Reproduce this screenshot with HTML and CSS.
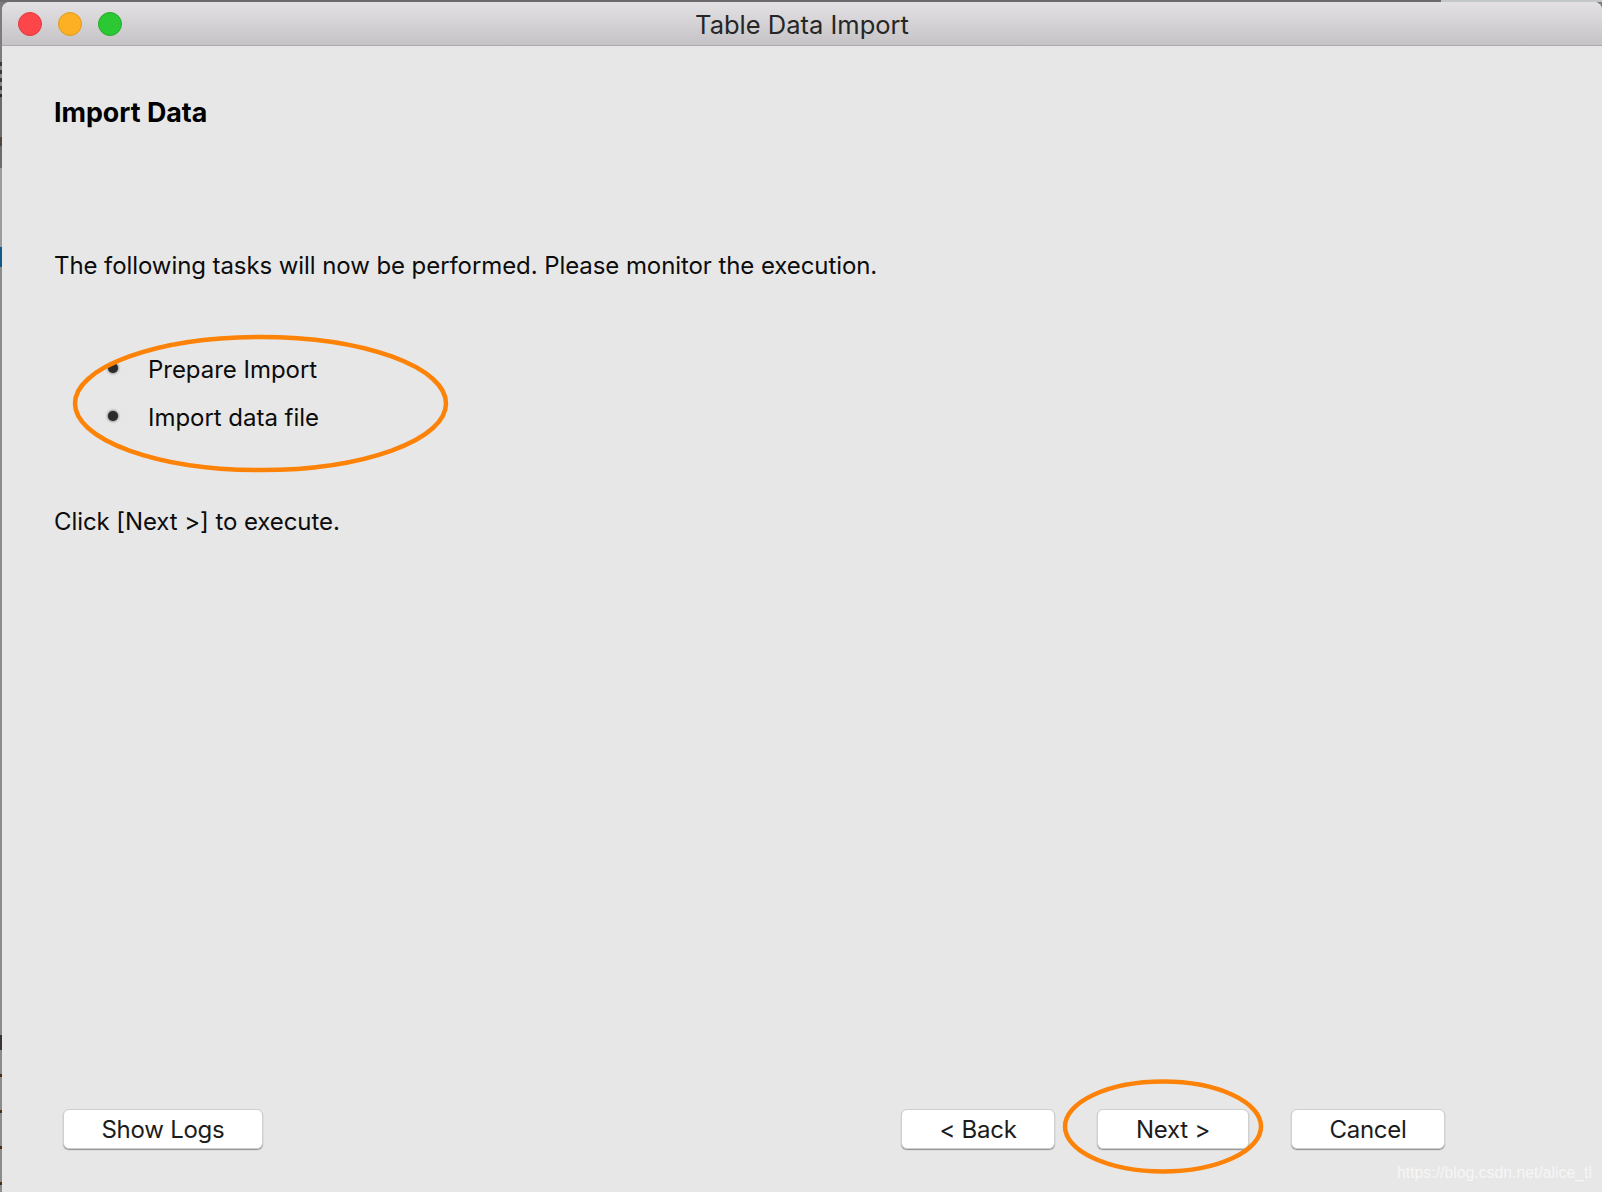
FILE: index.html
```html
<!DOCTYPE html>
<html lang="en">
<head>
<meta charset="utf-8">
<title>Table Data Import</title>
<link rel="stylesheet" href="styles.css">
</head>
<body>
<div class="topstrip"><span class="strip-dark"></span><span class="strip-light"></span></div>
<div class="window">
  <header class="titlebar">
    <div class="lights">
      <span class="light red"></span>
      <span class="light amber"></span>
      <span class="light green"></span>
    </div>
    <div class="title">Table Data Import</div>
  </header>
  <main class="content">
    <h1 class="heading">Import Data</h1>
    <p class="intro">The following tasks will now be performed. Please monitor the execution.</p>
    <ul class="tasks">
      <li class="task">Prepare Import</li>
      <li class="task">Import data file</li>
    </ul>
    <p class="hint">Click [Next &gt;] to execute.</p>
  </main>
  <footer class="actions">
    <button class="btn btn-logs">Show Logs</button>
    <div class="nav-buttons">
      <button class="btn btn-nav">&lt; Back</button>
      <button class="btn btn-next">Next &gt;</button>
      <button class="btn btn-nav">Cancel</button>
    </div>
  </footer>
</div>
<svg class="marks" width="1602" height="1192" viewBox="0 0 1602 1192" aria-hidden="true">
  <ellipse cx="260.5" cy="403.5" rx="185.5" ry="66.5" fill="none" stroke="#fd8208" stroke-width="4.5"/>
  <ellipse cx="1163" cy="1126.5" rx="98" ry="45" fill="none" stroke="#fd8208" stroke-width="4.5"/>
</svg>
<div class="watermark">https://blog.csdn.net/alice_tl</div>
</body>
</html>
```
FILE: styles.css
```css
html, body {
  margin: 0;
  padding: 0;
}
body {
  position: relative;
  width: 1602px;
  height: 1192px;
  overflow: hidden;
  background: linear-gradient(#7c7c7e 62px,
    #3a3a3a 62px, #3a3a3a 66px, #8a8a8a 66px, #8a8a8a 70px,
    #3a3a3a 70px, #3a3a3a 74px, #8a8a8a 74px, #8a8a8a 78px,
    #3a3a3a 78px, #3a3a3a 82px, #8a8a8a 82px, #8a8a8a 86px,
    #3a3a3a 86px, #3a3a3a 90px, #8a8a8a 90px, #8a8a8a 94px,
    #2a2a2a 94px, #2a2a2a 97px, #6c6c6e 97px, #6c6c6e 137px,
    #50463c 137px, #50463c 146px, #6c6c6e 146px, #6c6c6e 168px,
    #9c9c9c 168px, #9c9c9c 247px,
    #0e5a8a 247px, #0e5a8a 267px,
    #8c8c8c 267px, #8c8c8c 1035px,
    #3c3434 1035px, #3c3434 1050px,
    #8c8c8c 1050px, #8c8c8c 1074px, #4a3010 1074px, #4a3010 1077px,
    #8c8c8c 1077px, #8c8c8c 1110px, #4a3010 1110px, #4a3010 1113px,
    #8c8c8c 1113px, #8c8c8c 1146px, #4a3010 1146px, #4a3010 1149px,
    #8c8c8c 1149px, #8c8c8c 1182px, #4a3010 1182px, #4a3010 1185px,
    #8c8c8c 1185px);
  font-family: Inter, "Noto Sans", "Liberation Sans", sans-serif;
  color: #0c0c0c;
}
.topstrip {
  display: flex;
  height: 2px;
}
.strip-dark {
  width: 1441px;
  background: #6f6b6c;
}
.strip-light {
  flex: 1;
  background: #c4c8c8;
}
.window {
  margin-left: 2px;
  height: 1190px;
  display: flex;
  flex-direction: column;
  background: #e7e7e7;
  border-radius: 8px 8px 0 0;
  overflow: hidden;
}
.titlebar {
  position: relative;
  flex: none;
  height: 44px;
  box-sizing: border-box;
  display: flex;
  align-items: center;
  justify-content: center;
  background: linear-gradient(#e3e1e3, #c5c3c5);
  border-bottom: 1px solid #acaaac;
}
.lights {
  position: absolute;
  left: 16px;
  top: 10px;
  display: flex;
  gap: 16px;
}
.light {
  width: 22px;
  height: 22px;
  border-radius: 50%;
  border: 1px solid;
}
.red { background: #fc4649; border-color: #df3b3e; }
.amber { background: #fdb024; border-color: #de9a20; }
.green { background: #2ac833; border-color: #25ab2c; }
.title {
  font-size: 25.5px;
  color: #262626;
  padding-top: 2px;
}
.content {
  flex: 1;
  padding: 50px 0 0 52px;
}
.heading {
  margin: 0;
  font-size: 26.8px;
  line-height: 32px;
  font-weight: 700;
  color: #000;
}
.intro {
  margin: 122px 0 0;
  font-size: 24px;
  line-height: 32px;
  letter-spacing: -0.08px;
}
.tasks {
  list-style: none;
  margin: 72px 0 0;
  padding: 0 0 0 94px;
}
.task {
  position: relative;
  font-size: 24px;
  line-height: 32px;
  margin-bottom: 16px;
  letter-spacing: -0.03px;
}
.task::before {
  content: "";
  position: absolute;
  left: -40px;
  top: 9px;
  width: 10px;
  height: 10px;
  border-radius: 50%;
  background: #2b2b2b;
  box-shadow: 0 0 3px #2b2b2b;
}
.hint {
  margin: 72px 0 0;
  font-size: 24px;
  line-height: 32px;
  letter-spacing: -0.08px;
}
.actions {
  flex: none;
  display: flex;
  justify-content: space-between;
  padding: 0 157px 43px 61px;
}
.nav-buttons {
  display: flex;
  gap: 42px;
}
.btn {
  height: 40px;
  padding: 0;
  box-sizing: border-box;
  background: #fff;
  border: 1px solid #cfcfcf;
  border-radius: 6px;
  box-shadow: 0 1px 1px #8f8f8f;
  font-family: inherit;
  font-size: 24px;
  letter-spacing: -0.25px;
  color: #1c1c1c;
}
.btn-logs { width: 200px; }
.btn-nav { width: 154px; }
.btn-next { width: 152px; }
.marks {
  position: absolute;
  left: 0;
  top: 0;
}
.watermark {
  position: absolute;
  left: 1397px;
  top: 1163px;
  font-family: "Liberation Sans", Arial, sans-serif;
  font-size: 15.8px;
  line-height: 20px;
  color: #fff;
  opacity: 0.65;
  white-space: nowrap;
}
```
